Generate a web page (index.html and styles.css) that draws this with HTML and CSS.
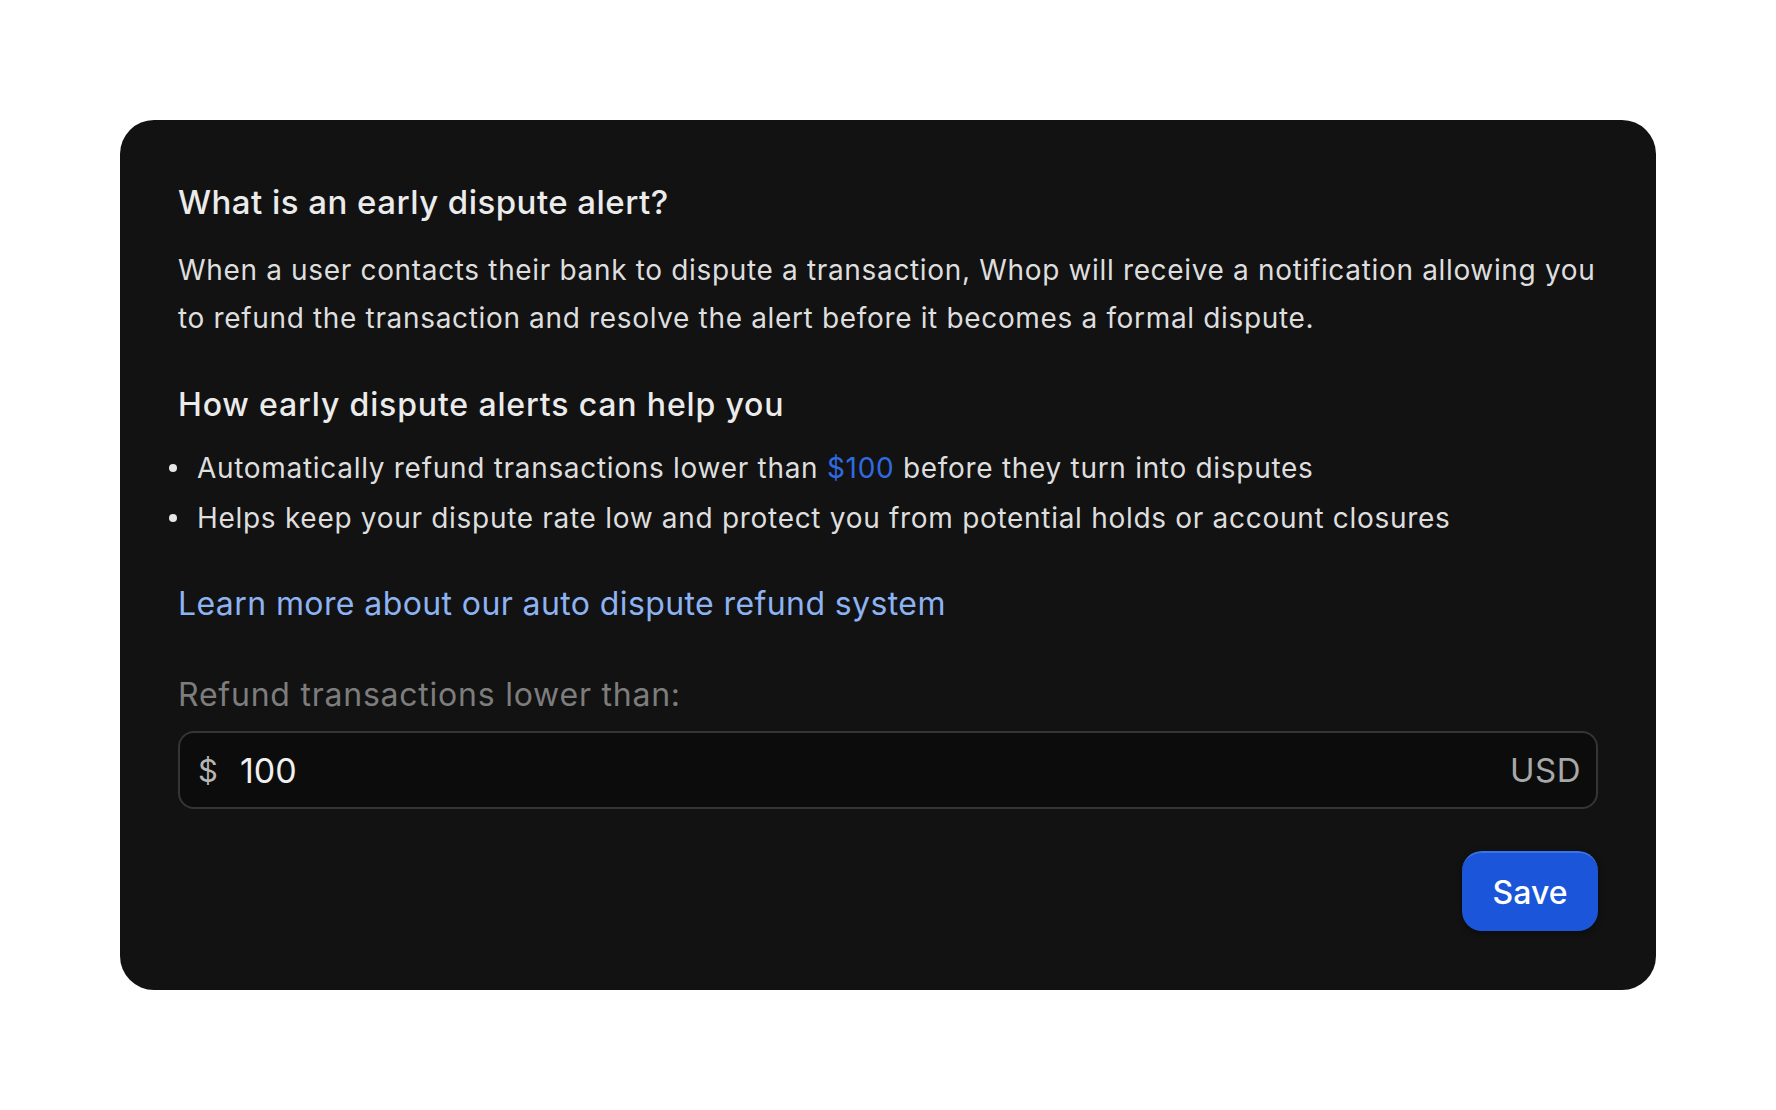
FILE: index.html
```html
<!DOCTYPE html>
<html lang="en">
<head>
  <meta charset="UTF-8" />
  <meta name="viewport" content="width=device-width, initial-scale=1.0" />
  <title>Early dispute alerts</title>
  <link rel="stylesheet" href="styles.css">
</head>
<body>
  <main class="card">
    <h2 class="title">What is an early dispute alert?</h2>
    <p class="intro">When a user contacts their bank to dispute a transaction, Whop will receive a notification allowing you to refund the transaction and resolve the alert before it becomes a formal dispute.</p>

    <h2 class="title help">How early dispute alerts can help you</h2>
    <ul class="points">
      <li>Automatically refund transactions lower than <span class="amount">$100</span> before they turn into disputes</li>
      <li>Helps keep your dispute rate low and protect you from potential holds or account closures</li>
    </ul>

    <a class="learn" href="#">Learn more about our auto dispute refund system</a>

    <label class="field-label" for="limit">Refund transactions lower than:</label>
    <div class="money-input">
      <span class="currency">$</span>
      <input id="limit" type="text" value="100" />
      <span class="code">USD</span>
    </div>

    <div class="actions">
      <button class="save">Save</button>
    </div>
  </main>
</body>
</html>
```

FILE: styles.css
```css
* { box-sizing: border-box; }
body {
  margin: 0;
  padding: 120px;
  background: #fff;
  font-family: Inter, "Noto Sans", sans-serif;
}
.card {
  background: #121212;
  border-radius: 34px;
  padding: 60px 58px 59px;
  color: #e6e6e6;
}
.title {
  margin: 0;
  font-size: 33px;
  line-height: 44px;
  font-weight: 500;
  color: #ebebeb;
  letter-spacing: 0.46px;
}
.title.help {
  margin-top: 41px;
  font-size: 32px;
  letter-spacing: 0.85px;
}
.intro {
  margin: 22px 0 0;
  font-size: 28px;
  line-height: 48px;
  letter-spacing: 0.66px;
  color: #dedede;
}
.points {
  list-style: none;
  margin: 16px 0 0;
  padding: 0 0 0 19px;
  font-size: 28px;
  line-height: 50px;
  letter-spacing: 0.7px;
  color: #dedede;
}
.points li {
  position: relative;
}
.points li::before {
  content: "";
  position: absolute;
  left: -28px;
  top: 21px;
  width: 8px;
  height: 8px;
  border-radius: 50%;
  background: #e6e6e6;
}
.amount {
  color: #2f6ae0;
}
.learn {
  display: block;
  margin-top: 39px;
  font-size: 32px;
  line-height: 44px;
  color: #8db3f3;
  text-decoration: none;
  letter-spacing: 0.4px;
}
.field-label {
  display: block;
  margin-top: 47px;
  font-size: 32px;
  line-height: 44px;
  color: #7d7d7d;
  letter-spacing: 0.77px;
}
.money-input {
  margin-top: 14px;
  height: 78px;
  display: flex;
  align-items: center;
  padding: 0 15px 0 18px;
  background: #0c0c0c;
  border: 2px solid #353535;
  border-radius: 16px;
}
.currency {
  font-size: 31px;
  color: #b5b5b5;
  margin-right: 22px;
}
.money-input input {
  flex: 1;
  background: none;
  border: none;
  outline: none;
  padding: 0;
  font-family: inherit;
  font-size: 34px;
  color: #f0f0f0;
}
.code {
  font-size: 33px;
  color: #a8a8a8;
  letter-spacing: 0.5px;
}
.actions {
  margin-top: 42px;
  display: flex;
  justify-content: flex-end;
}
.save {
  width: 136px;
  height: 80px;
  border: none;
  border-top: 2px solid #3a74ea;
  border-radius: 20px;
  background: #1b55d9;
  color: #fff;
  font-family: inherit;
  font-size: 32px;
  font-weight: 500;
  cursor: pointer;
  box-shadow: 0 2px 6px rgba(0, 0, 0, 0.4);
}
```
